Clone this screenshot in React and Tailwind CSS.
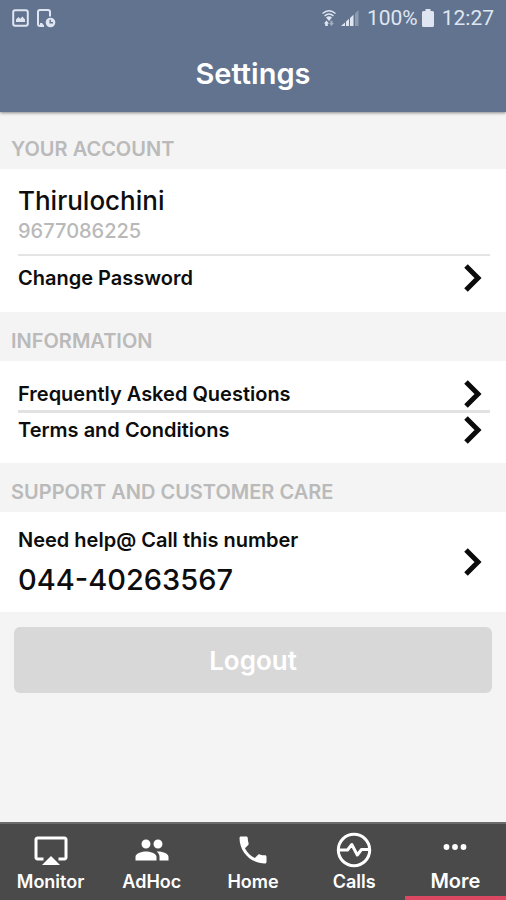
import { useState } from "react";
import { MdAirplay, MdPeople, MdPhone } from "react-icons/md";

function CallsIcon({ className }) {
  return (
    <svg viewBox="0 0 36 36" fill="none" stroke="currentColor" className={className}>
      <circle cx="18" cy="18" r="15.7" strokeWidth="3" />
      <path
        d="M3 18H11.5L15.8 12.5L21.3 23L25.5 17.5H33"
        strokeWidth="3"
        strokeLinejoin="round"
      />
    </svg>
  );
}

function MoreIcon({ className }) {
  return (
    <svg viewBox="0 0 36 36" fill="currentColor" className={className}>
      <circle cx="9.5" cy="15" r="2.9" />
      <circle cx="18" cy="15" r="2.9" />
      <circle cx="26.5" cy="15" r="2.9" />
    </svg>
  );
}

function Chevron() {
  return (
    <svg viewBox="0 0 18 28" fill="none" className="w-[18px] h-7 shrink-0">
      <path d="M2 2L14 14L2 26" stroke="#0b0b0b" strokeWidth="5" />
    </svg>
  );
}

function StatusBar() {
  return (
    <div className="flex items-center justify-between h-9 px-3 text-[#dfe6f1]">
      <div className="flex items-center gap-2">
        {/* 스크린샷 알림 */}
        <svg viewBox="0 0 17 18" fill="none" className="w-[17px] h-[18px]">
          <rect x="1.2" y="1.2" width="14.6" height="15.6" rx="2" stroke="currentColor" strokeWidth="2" />
          <path d="M4 13V10.5L6.5 8L8.2 9.8L10.5 7.5L13 10.5V13Z" fill="currentColor" />
        </svg>
        {/* 기기 예약 알림 */}
        <svg viewBox="0 0 19 19" fill="none" className="w-[19px] h-[19px]">
          <path
            d="M13 7.5V3A2 2 0 0 0 11 1H3A2 2 0 0 0 1 3V15A2 2 0 0 0 3 17H7"
            stroke="currentColor"
            strokeWidth="2"
          />
          <path d="M3 14H5L7 16.5V18H3Z" fill="currentColor" />
          <circle cx="13.5" cy="13.5" r="4.8" fill="currentColor" />
          <path d="M13.2 10.8V13.8H16" stroke="#62738f" strokeWidth="1.4" />
        </svg>
      </div>
      <div className="flex items-center gap-1 font-[Roboto,sans-serif] text-[21px] leading-6">
        <svg viewBox="0 0 16 18" fill="none" className="w-4 h-[18px]">
          <path d="M1.5 4.5Q8 -1 14.5 4.5" stroke="currentColor" strokeWidth="1.4" />
          <path d="M3.5 7Q8 3 12.5 7" stroke="currentColor" strokeWidth="1.4" />
          <path d="M5 8.5Q8 6 11 8.5L8 12Z" fill="currentColor" />
          <path d="M5.5 11.5L8 14.5H6.8V17H4.2V14.5H3Z" fill="currentColor" />
          <path d="M10.5 17L8 14H9.4V11.8H11.6V14H13Z" fill="currentColor" opacity="0.5" />
        </svg>
        <svg viewBox="0 0 18 18" fill="currentColor" className="w-[18px] h-[18px] mr-1">
          <path d="M0 17L4 13.5V17Z" />
          <path d="M5 12.5L8 9.8V17H5Z" />
          <path d="M9 9L12.5 5.8V17H9Z" />
          <path d="M14 4.4L17.5 1V17H14Z" opacity="0.35" />
        </svg>
        <span>100%</span>
        <svg viewBox="0 0 12 18" fill="currentColor" className="w-3 h-[18px] mr-1">
          <path d="M3.5 0H8.5V2H10.5Q12 2 12 3.5V16.5Q12 18 10.5 18H1.5Q0 18 0 16.5V3.5Q0 2 1.5 2H3.5Z" />
        </svg>
        <span>12:27</span>
      </div>
    </div>
  );
}

function SectionTitle({ children }) {
  return (
    <h2 className="pt-[17px] pb-2 pl-[11px] text-xl leading-6 font-semibold text-[#bababa]">
      {children}
    </h2>
  );
}

const tabs = [
  { name: "Monitor", icon: MdAirplay },
  { name: "AdHoc", icon: MdPeople },
  { name: "Home", icon: MdPhone },
  { name: "Calls", icon: CallsIcon },
  { name: "More", icon: MoreIcon },
];

function App() {
  const [activeTab, setActiveTab] = useState("More");

  return (
    <div className="flex flex-col min-h-screen bg-[#f4f4f4] font-[Inter,sans-serif] text-[#0d0d0d]">
      <header className="bg-[#62738f] shadow-[0_1px_3px_rgba(0,0,0,0.45)]">
        <StatusBar />
        <h1 className="h-[76px] text-center text-[29px] leading-[76px] font-semibold text-white">
          Settings
        </h1>
      </header>

      <main className="grow pt-2">
        {/* 계정 */}
        <SectionTitle>YOUR ACCOUNT</SectionTitle>
        <section className="bg-white pt-4 pb-3 pl-[18px] pr-4">
          <div className="pb-[9px] border-b-2 border-[#e4e4e4]">
            <p className="text-[26px] leading-8 font-medium">Thirulochini</p>
            <p className="text-xl leading-7 font-medium text-[#b9b9b9]">9677086225</p>
          </div>
          <button className="flex items-center justify-between w-full h-11 pr-2 text-xl font-semibold">
            Change Password
            <Chevron />
          </button>
        </section>

        {/* 정보 */}
        <SectionTitle>INFORMATION</SectionTitle>
        <section className="bg-white pt-4 pb-4 pl-[18px] pr-4">
          <a
            href="#faq"
            className="flex items-center justify-between h-9 pr-2 border-b-3 border-[#e2e2e2] text-xl font-semibold"
          >
            Frequently Asked Questions
            <Chevron />
          </a>
          <a
            href="#terms"
            className="flex items-center justify-between h-[34px] pr-2 text-xl font-semibold"
          >
            Terms and Conditions
            <Chevron />
          </a>
        </section>

        {/* 고객 지원 */}
        <SectionTitle>SUPPORT AND CUSTOMER CARE</SectionTitle>
        <a
          href="tel:04440263567"
          className="flex items-center justify-between bg-white py-4 pl-[18px] pr-6"
        >
          <div>
            <p className="text-xl leading-6 font-semibold">Need help@ Call this number</p>
            <p className="mt-3 text-[29px] leading-8 font-medium">044-40263567</p>
          </div>
          <Chevron />
        </a>

        <div className="px-[14px] py-[15px]">
          <button className="w-full h-[66px] rounded-md bg-[#d8d8d8] text-[26px] font-semibold text-white">
            Logout
          </button>
        </div>
      </main>

      {/* 하단 탭 */}
      <nav className="grid grid-cols-5 border-t-2 border-[#6b6b6b] bg-[#4a4a4b]">
        {tabs.map(({ name, icon: Icon }) => (
          <button
            key={name}
            onClick={() => setActiveTab(name)}
            className={`flex flex-col items-center pt-2 pb-px border-b-4 text-white font-semibold leading-[27px] ${
              activeTab === name
                ? "border-[#dc4862] text-xl/[27px]"
                : "border-transparent text-lg/[27px]"
            }`}
          >
            <span className="flex items-center justify-center h-9">
              <Icon className="w-9 h-9" />
            </span>
            {name}
          </button>
        ))}
      </nav>
    </div>
  );
}

export default App;
